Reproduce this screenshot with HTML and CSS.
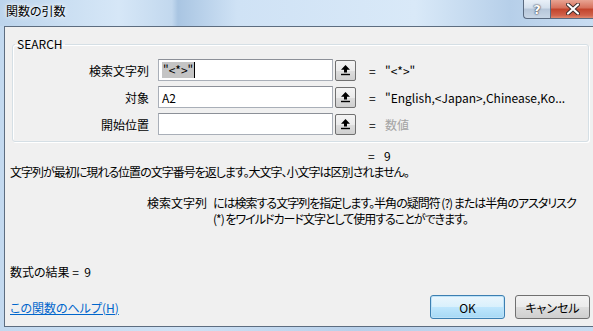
FILE: index.html
```html
<!DOCTYPE html>
<html lang="ja">
<head>
    <meta charset="UTF-8">
    <title>関数の引数</title>
    <link rel="stylesheet" href="styles.css">
</head>
<body>
<div class="window">
    <div class="titlebar">
        <span class="title">関数の引数</span>
        <div class="controls">
            <span class="btn-help">?</span>
            <span class="btn-close">
                <svg width="14" height="12" viewBox="0 0 14 12">
                    <path d="M2 1.5 L12 10.5 M12 1.5 L2 10.5" stroke="#3a2a2a" stroke-width="4" stroke-linecap="round"/>
                    <path d="M2 1.5 L12 10.5 M12 1.5 L2 10.5" stroke="#fff" stroke-width="2.2" stroke-linecap="round"/>
                </svg>
            </span>
        </div>
    </div>
    <div class="client">
        <fieldset class="group">
            <legend>SEARCH</legend>
            <div class="arg-row">
                <span class="arg-label">検索文字列</span>
                <div class="ref-edit"><span class="sel">"&lt;*&gt;"</span><span class="caret"></span></div>
                <button class="ref-btn">
                    <svg width="11" height="12" viewBox="0 0 11 12"><path d="M5.5 1 L10 5.8 H7 V8.5 H4 V5.8 H1 Z" fill="#000"/><rect x="1" y="9.8" width="9" height="1.4" fill="#000"/></svg>
                </button>
                <span class="eq">=</span>
                <span class="arg-value">"&lt;*&gt;"</span>
            </div>
            <div class="arg-row">
                <span class="arg-label">対象</span>
                <div class="ref-edit">A2</div>
                <button class="ref-btn">
                    <svg width="11" height="12" viewBox="0 0 11 12"><path d="M5.5 1 L10 5.8 H7 V8.5 H4 V5.8 H1 Z" fill="#000"/><rect x="1" y="9.8" width="9" height="1.4" fill="#000"/></svg>
                </button>
                <span class="eq">=</span>
                <span class="arg-value">"English,&lt;Japan&gt;,Chinease,Ko...</span>
            </div>
            <div class="arg-row">
                <span class="arg-label">開始位置</span>
                <div class="ref-edit"></div>
                <button class="ref-btn">
                    <svg width="11" height="12" viewBox="0 0 11 12"><path d="M5.5 1 L10 5.8 H7 V8.5 H4 V5.8 H1 Z" fill="#000"/><rect x="1" y="9.8" width="9" height="1.4" fill="#000"/></svg>
                </button>
                <span class="eq">=</span>
                <span class="arg-value muted">数値</span>
            </div>
        </fieldset>
        <div class="func-result"><span class="eq">=</span><span>9</span></div>
        <p class="func-desc">文字列が最初に現れる位置の文字番号を返します。大文字、小文字は区別されません。</p>
        <div class="arg-help">
            <div class="arg-help-name">検索文字列</div>
            <div class="arg-help-text">
                <div>には検索する文字列を指定します。半角の疑問符 (?) または半角のアスタリスク</div>
                <div>(*) をワイルドカード文字として使用することができます。</div>
            </div>
        </div>
        <div class="formula-result">数式の結果 =&nbsp;&nbsp;9</div>
        <div class="footer">
            <a href="#" class="help-link">この関数のヘルプ(H)</a>
            <div class="buttons">
                <button class="btn btn-default">OK</button>
                <button class="btn">キャンセル</button>
            </div>
        </div>
    </div>
</div>
</body>
</html>
```

FILE: styles.css
```css
body {
    margin: 0;
    width: 593px;
    height: 331px;
    overflow: hidden;
    font-family: "Noto Sans CJK JP", sans-serif;
    font-size: 12px;
    font-feature-settings: "palt";
    color: #000;
}

.window {
    height: 331px;
    background: linear-gradient(90deg, #c3d9ef 0%, #cfe2f5 30%, #b8d0ea 60%, #c8dcf1 100%);
}

.titlebar {
    height: 26px;
    display: flex;
    justify-content: space-between;
    background: linear-gradient(90deg, #bcd4ec 0%, #d6e7f7 20%, #c2d8ee 29%, #a9c5e2 30%, #cfe2f5 40%, #d9e9f8 70%, #b6cfe9 86%, #c9ddf2 100%);
}

.title {
    padding: 3px 0 0 6px;
    line-height: 16px;
    text-shadow: 0 0 6px #fff, 0 0 3px #fff;
}

.controls {
    display: flex;
    align-items: flex-start;
    margin-right: -2px;
}

.btn-help,
.btn-close {
    height: 18px;
    display: flex;
    align-items: center;
    justify-content: center;
    border: 1px solid #5a6a80;
    border-top: none;
}

.btn-help {
    width: 26px;
    border-right: none;
    border-radius: 0 0 0 4px;
    background: linear-gradient(#e9f0f8, #d3dfec 45%, #b6c6d9 50%, #c8d6e6);
    color: #fff;
    font-family: "DejaVu Sans", sans-serif;
    font-weight: bold;
    font-size: 13px;
    text-shadow: 0 0 2px #334, 0 0 1px #223;
}

.btn-close {
    width: 43px;
    background: linear-gradient(#e8a493, #d66f5a 45%, #c2432b 50%, #d0614a 85%, #e08a70);
}

.client {
    margin-left: 4px;
    height: 299px;
    background: #f0f0f0;
    border-top: 1px solid #5d6d80;
    border-left: 1px solid #5d6d80;
    border-bottom: 1px solid #5d6d80;
}

.group {
    margin: 9px 4px 0 7px;
    padding: 7px 0 6px 0;
    border: 1px solid #d5dfe5;
    border-radius: 3px;
    box-shadow: inset 1px 1px 0 #fff, 1px 1px 0 #fff;
}

.group legend {
    margin-left: 2px;
    padding: 0 2px;
    line-height: 16px;
}

.arg-row {
    display: flex;
    align-items: center;
    height: 22px;
    margin-bottom: 5px;
}

.arg-row:last-child {
    margin-bottom: 0;
}

.arg-label {
    width: 136px;
    margin-right: 9px;
    text-align: right;
}

.ref-edit {
    width: 175px;
    height: 22px;
    box-sizing: border-box;
    padding-left: 3px;
    display: flex;
    align-items: center;
    border: 1px solid #a9afb8;
    border-top-color: #8c9098;
    background: #fff;
}

.sel {
    background: #c4c4c4;
    line-height: 16px;
    padding: 0 1px;
}

.caret {
    width: 1px;
    height: 16px;
    background: #000;
}

.ref-btn {
    width: 21px;
    height: 21px;
    margin-left: 2px;
    padding: 0;
    display: flex;
    align-items: center;
    justify-content: center;
    border: 1px solid #707070;
    border-radius: 2px;
    background: linear-gradient(#f4f4f4, #ebebeb 50%, #dddddd 51%, #cfcfcf);
}

.eq {
    margin-left: 13px;
    width: 16px;
}

.muted {
    color: #a3a3a3;
}

.func-result {
    display: flex;
    margin-top: 6px;
    padding-left: 350px;
    line-height: 16px;
}

.func-desc {
    margin: 0 0 0 5px;
    line-height: 16px;
    letter-spacing: -1px;
}

.arg-help {
    display: flex;
    margin-top: 15px;
    line-height: 16px;
    white-space: nowrap;
}

.arg-help-name {
    width: 202px;
    text-align: right;
    flex-shrink: 0;
}

.arg-help-text {
    margin-left: 6px;
    letter-spacing: -1px;
}

.formula-result {
    margin: 37px 0 0 5px;
    line-height: 16px;
}

.footer {
    display: flex;
    justify-content: space-between;
    align-items: center;
    margin: 15px 0 0 5px;
}

.help-link {
    color: #0066cc;
}

.buttons {
    display: flex;
    gap: 10px;
    margin-right: 3px;
}

.btn {
    width: 75px;
    height: 24px;
    padding: 0;
    font-family: inherit;
    font-size: 12px;
    font-feature-settings: "palt";
    border: 1px solid #707070;
    border-radius: 3px;
    background: linear-gradient(#f2f2f2, #ebebeb 50%, #dddddd 51%, #cfcfcf);
}

.btn-default {
    border-color: #3c7fb1;
    box-shadow: inset 0 0 0 1px #bde2f8;
    background: linear-gradient(#eaf6fd, #d9f0fc 50%, #bee6fd 51%, #a7d9f5);
}
```
